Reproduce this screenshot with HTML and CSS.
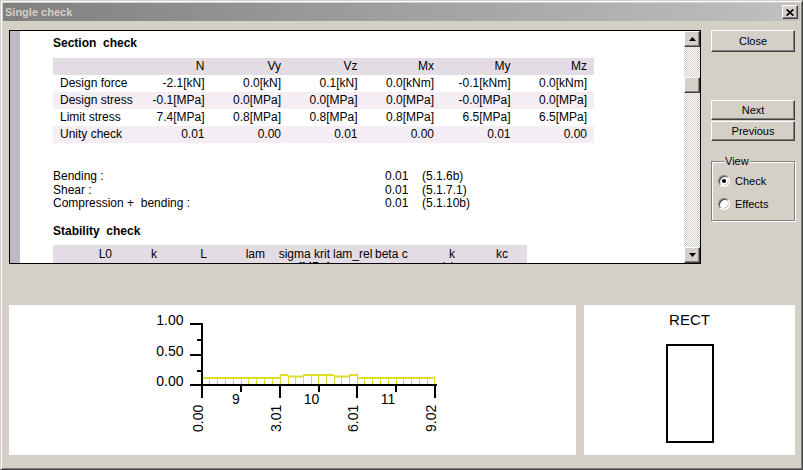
FILE: index.html
```html
<!DOCTYPE html>
<html>
<head>
<meta charset="utf-8">
<title>Single check</title>
<link rel="stylesheet" href="styles.css">
</head>
<body>
<div class="window">
  <div class="titlebar">
    <span class="title">Single check</span>
    <button class="tb-close" aria-label="Close"><svg width="8" height="7" viewBox="0 0 8 7"><path d="M0.6 0.4 L7.4 6.6 M7.4 0.4 L0.6 6.6" stroke="#000" stroke-width="1.7" fill="none"/></svg></button>
  </div>
  <div class="client">
    <div class="top-row">
      <div class="report">
        <div class="strip"></div>
        <div class="sheet">
          <div class="heading">Section&nbsp; check</div>
          <div class="table">
            <div class="trow thead"><span></span><span>N</span><span>Vy</span><span>Vz</span><span>Mx</span><span>My</span><span>Mz</span></div>
            <div class="trow"><span>Design force</span><span>-2.1[kN]</span><span>0.0[kN]</span><span>0.1[kN]</span><span>0.0[kNm]</span><span>-0.1[kNm]</span><span>0.0[kNm]</span></div>
            <div class="trow stripe"><span>Design stress</span><span>-0.1[MPa]</span><span>0.0[MPa]</span><span>0.0[MPa]</span><span>0.0[MPa]</span><span>-0.0[MPa]</span><span>0.0[MPa]</span></div>
            <div class="trow"><span>Limit stress</span><span>7.4[MPa]</span><span>0.8[MPa]</span><span>0.8[MPa]</span><span>0.8[MPa]</span><span>6.5[MPa]</span><span>6.5[MPa]</span></div>
            <div class="trow stripe"><span>Unity check</span><span>0.01</span><span>0.00</span><span>0.01</span><span>0.00</span><span>0.01</span><span>0.00</span></div>
          </div>
          <div class="notes">
            <div class="note"><span>Bending :</span><span>0.01</span><span>(5.1.6b)</span></div>
            <div class="note"><span>Shear :</span><span>0.01</span><span>(5.1.7.1)</span></div>
            <div class="note"><span>Compression +&nbsp; bending :</span><span>0.01</span><span>(5.1.10b)</span></div>
          </div>
          <div class="heading heading2">Stability&nbsp; check</div>
          <div class="stab">
            <span>L0</span><span>k</span><span>L</span><span>lam</span><span>sigma krit<br>[MPa]</span><span>lam_rel</span><span>beta c</span><span>k<br>(y)</span><span>kc</span><span></span>
          </div>
        </div>
        <div class="vscroll">
          <div class="sbtn"><svg width="7" height="4" viewBox="0 0 7 4"><path d="M3.5 0 L7 4 L0 4 Z" fill="#000"/></svg></div>
          <div class="track"><div class="thumb"></div></div>
          <div class="sbtn"><svg width="7" height="4" viewBox="0 0 7 4"><path d="M0 0 L7 0 L3.5 4 Z" fill="#000"/></svg></div>
        </div>
      </div>
      <div class="side">
        <button class="btn btn-close">Close</button>
        <button class="btn btn-next">Next</button>
        <button class="btn btn-prev">Previous</button>
        <fieldset class="view">
          <legend>View</legend>
          <div class="radio"><i class="on"></i><span>Check</span></div>
          <div class="radio"><i></i><span>Effects</span></div>
        </fieldset>
      </div>
    </div>
    <div class="bottom-row">
      <div class="chart">
        <svg width="567" height="150" viewBox="9 305 567 150">
          <g stroke="#dede2a" fill="none">
            <path stroke-width="2" d="M202 378 H280 M280 375 H288 M288 376.5 H303 M303 375 H334 M334 376.5 H349 M349 375 H357 M357 378 H435"/>
            <path stroke-width="1" d="M209.5 378 V384 M217.5 378 V384 M225.5 378 V384 M233.5 378 V384 M241.5 378 V384 M248.5 378 V384 M256.5 378 V384 M264.5 378 V384 M272.5 378 V384 M280.5 374 V384 M288.5 375 V384 M295.5 376 V384 M303.5 375 V384 M311.5 375 V384 M318.5 375 V384 M326.5 375 V384 M334.5 375 V384 M341.5 376 V384 M349.5 375 V384 M357.5 374 V384 M364.5 378 V384 M372.5 378 V384 M380.5 378 V384 M388.5 378 V384 M396.5 378 V384 M403.5 378 V384 M411.5 378 V384 M419.5 378 V384 M427.5 378 V384 M434.5 377 V384"/>
          </g>
          <g fill="#000">
            <rect x="201" y="323" width="2" height="63"/>
            <rect x="190" y="323" width="12" height="2"/>
            <rect x="190" y="354" width="12" height="2"/>
            <rect x="197" y="339" width="5" height="2"/>
            <rect x="197" y="370" width="5" height="2"/>
            <rect x="190" y="384" width="247" height="2"/>
            <rect x="201" y="386" width="2" height="12"/>
            <rect x="279" y="386" width="2" height="12"/>
            <rect x="356" y="386" width="2" height="12"/>
            <rect x="434" y="386" width="2" height="12"/>
            <rect x="240" y="386" width="2" height="6"/>
            <rect x="318" y="386" width="2" height="6"/>
            <rect x="395" y="386" width="2" height="6"/>
          </g>
          <g class="axis-text" fill="#000">
            <text x="183.5" y="325" text-anchor="end">1.00</text>
            <text x="183.5" y="356" text-anchor="end">0.50</text>
            <text x="183.5" y="386" text-anchor="end">0.00</text>
            <text x="236" y="404" text-anchor="middle">9</text>
            <text x="311.5" y="404" text-anchor="middle">10</text>
            <text x="388" y="404" text-anchor="middle">11</text>
            <text transform="translate(202.5 432) rotate(-90)">0.00</text>
            <text transform="translate(280.5 432) rotate(-90)">3.01</text>
            <text transform="translate(357.5 432) rotate(-90)">6.01</text>
            <text transform="translate(435.5 432) rotate(-90)">9.02</text>
          </g>
        </svg>
      </div>
      <div class="shape">
        <div class="shape-title">RECT</div>
        <div class="rect-shape"></div>
      </div>
    </div>
  </div>
</div>
</body>
</html>
```
FILE: styles.css
```css
html, body {
  margin: 0;
  padding: 0;
  background: #d4d0c8;
}
body {
  font-family: "Liberation Sans", Arial, sans-serif;
  color: #000;
}
.window {
  width: 803px;
  height: 470px;
  box-sizing: border-box;
  border: 1px solid;
  border-color: #d4d0c8 #404040 #404040 #d4d0c8;
  box-shadow: inset 1px 1px #fff, inset -1px -1px #808080;
  padding: 2px;
  background: #d4d0c8;
  display: flex;
  flex-direction: column;
}
.titlebar {
  height: 18px;
  flex: none;
  display: flex;
  align-items: center;
  justify-content: space-between;
  padding: 0 2px;
  background: linear-gradient(to right, #808080, #c0c0c0);
}
.title {
  color: #d4d0c8;
  font-weight: bold;
  font-size: 11px;
  line-height: 13px;
}
.raised, .tb-close, .sbtn, .thumb, .btn {
  background: #d4d0c8;
  box-sizing: border-box;
  border: 1px solid;
  border-color: #fff #404040 #404040 #fff;
  box-shadow: inset -1px -1px #808080;
}
.tb-close {
  width: 16px;
  height: 14px;
  padding: 0;
  display: flex;
  align-items: center;
  justify-content: center;
}
.tb-close svg { display: block; }
.client {
  padding: 9px 5px 0 6px;
}
.top-row {
  display: flex;
  gap: 10px;
  height: 234px;
}
.report {
  width: 692px;
  height: 234px;
  box-sizing: border-box;
  border: 1px solid #000;
  background: #fff;
  display: flex;
}
.strip {
  width: 10px;
  flex: none;
  background: #bebac4;
}
.sheet {
  width: 664px;
  flex: none;
  box-sizing: border-box;
  overflow: hidden;
  padding: 4px 0 0 33px;
  font-size: 12px;
  white-space: nowrap;
}
.heading {
  font-weight: bold;
  height: 17px;
  line-height: 17px;
  margin-bottom: 6px;
}
.trow {
  display: grid;
  grid-template-columns: 82px repeat(6, 76.5px);
  width: 541px;
  height: 17px;
  line-height: 17px;
}
.trow span {
  text-align: right;
  padding-right: 7px;
}
.trow span:first-child {
  text-align: left;
  padding: 0 0 0 7px;
}
.thead { background: #e4dce4; }
.stripe { background: #f4edf4; }
.notes {
  margin-top: 27px;
  line-height: 13.5px;
}
.note {
  display: grid;
  grid-template-columns: 332px 37px auto;
}
.heading2 {
  margin-top: 12px;
  margin-bottom: 5.5px;
}
.stab {
  display: grid;
  grid-template-columns: 62px 45px 50px 58px 65px 42px 31px 52px 53px 16px;
  width: 474px;
  height: 30px;
  box-sizing: border-box;
  padding-top: 2.5px;
  line-height: 13px;
  background: #e4dce4;
}
.stab span {
  text-align: right;
  padding-right: 3px;
}
.vscroll {
  width: 16px;
  flex: none;
  display: flex;
  flex-direction: column;
}
.sbtn {
  height: 16px;
  flex: none;
  display: flex;
  align-items: center;
  justify-content: center;
}
.sbtn svg { display: block; }
.track {
  flex: 1;
  background: repeating-conic-gradient(#d4d0c8 0 25%, #fff 0 50%) 0 0 / 2px 2px;
}
.thumb {
  height: 16px;
  margin-top: 30px;
}
.side {
  width: 84px;
  display: flex;
  flex-direction: column;
}
.btn {
  display: block;
  width: 84px;
  height: 22px;
  padding: 0;
  font-family: "Liberation Sans", Arial, sans-serif;
  font-size: 11px;
  color: #000;
}
.btn-next {
  margin-top: 48px;
  height: 20px;
}
.btn-prev {
  margin-top: 1px;
  height: 20px;
}
.view {
  width: 84px;
  box-sizing: border-box;
  margin: 14px 0 0;
  padding: 1px 0 5px 6px;
  border: 1px solid #808080;
  box-shadow: inset 1px 1px #fff, 1px 1px #fff;
  min-inline-size: 0;
}
.view legend {
  font-size: 11px;
  line-height: 13px;
  padding: 0 1px;
  margin-left: 6px;
  background: #d4d0c8;
}
.radio {
  display: flex;
  align-items: center;
  height: 23px;
  gap: 5px;
  font-size: 11px;
}
.radio i {
  width: 12px;
  height: 12px;
  box-sizing: border-box;
  border-radius: 50%;
  border: 1px solid;
  border-color: #808080 #fff #fff #808080;
  background: #fff;
  box-shadow: inset 1px 1px #404040, inset -1px -1px #d4d0c8;
  display: flex;
  align-items: center;
  justify-content: center;
}
.radio i.on::after {
  content: "";
  width: 4px;
  height: 4px;
  border-radius: 50%;
  background: #000;
}
.bottom-row {
  display: flex;
  gap: 8px;
  margin-top: 41px;
  height: 150px;
}
.chart {
  width: 567px;
  background: #fff;
}
.chart svg { display: block; }
.axis-text {
  font-family: "Liberation Sans", Arial, sans-serif;
  font-size: 14px;
}
.shape {
  width: 212px;
  background: #fff;
  display: flex;
  flex-direction: column;
  align-items: center;
}
.shape-title {
  font-size: 15px;
  line-height: 17px;
  margin-top: 6px;
}
.rect-shape {
  width: 48px;
  height: 99px;
  box-sizing: border-box;
  border: 2px solid #000;
  margin-top: 16px;
}
```
